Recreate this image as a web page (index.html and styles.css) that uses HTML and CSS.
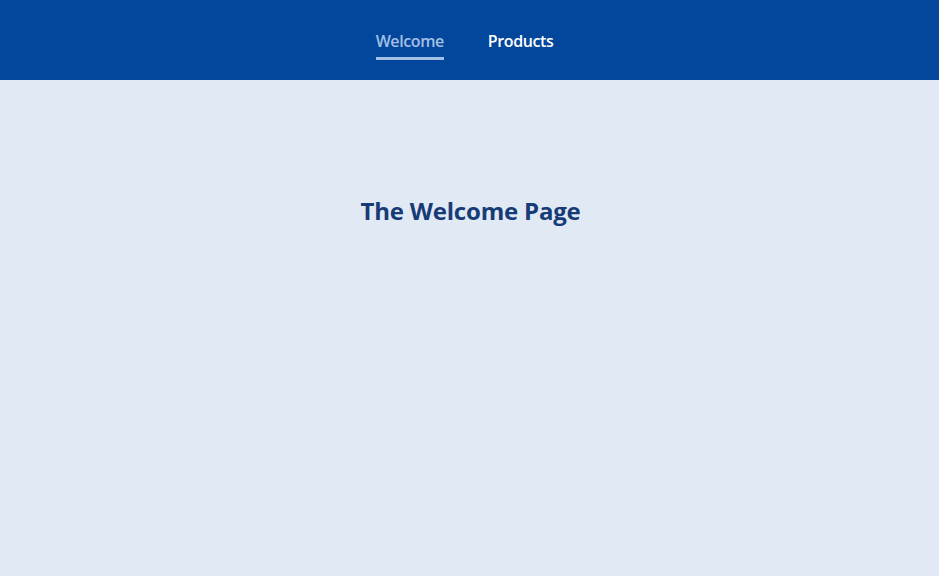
FILE: index.html
```html
<!DOCTYPE html>
<html>
<head>
<meta charset="utf-8">
<link rel="stylesheet" href="styles.css">
</head>
<body>
<header class="topbar">
  <nav class="nav">
    <a class="nav-link active">Welcome</a>
    <a class="nav-link">Products</a>
  </nav>
</header>
<main class="content">
  <h1 class="title">The Welcome Page</h1>
</main>
</body>
</html>
```
FILE: styles.css
```css
html, body {
  margin: 0;
  padding: 0;
  height: 100%;
}
body {
  background: #e0e9f4;
  font-family: "Open Sans", "Noto Sans", sans-serif;
}
.topbar {
  height: 80px;
  background: #03479c;
  display: flex;
  justify-content: center;
}
.nav {
  display: flex;
  gap: 44px;
  padding-top: 29px;
  padding-right: 10px;
}
.nav-link {
  color: #ffffff;
  font-size: 16px;
  font-weight: 600;
  letter-spacing: -0.4px;
  height: 31px;
  line-height: 24px;
  box-sizing: border-box;
}
.nav-link.active {
  color: #a4bfe4;
  border-bottom: 3px solid #a4bfe4;
}
.content {
  display: flex;
  justify-content: center;
  padding-top: 113px;
  padding-left: 2px;
}
.title {
  margin: 0;
  color: #173b76;
  font-size: 24px;
  font-weight: 700;
  letter-spacing: -0.2px;
  line-height: 36px;
}
```
